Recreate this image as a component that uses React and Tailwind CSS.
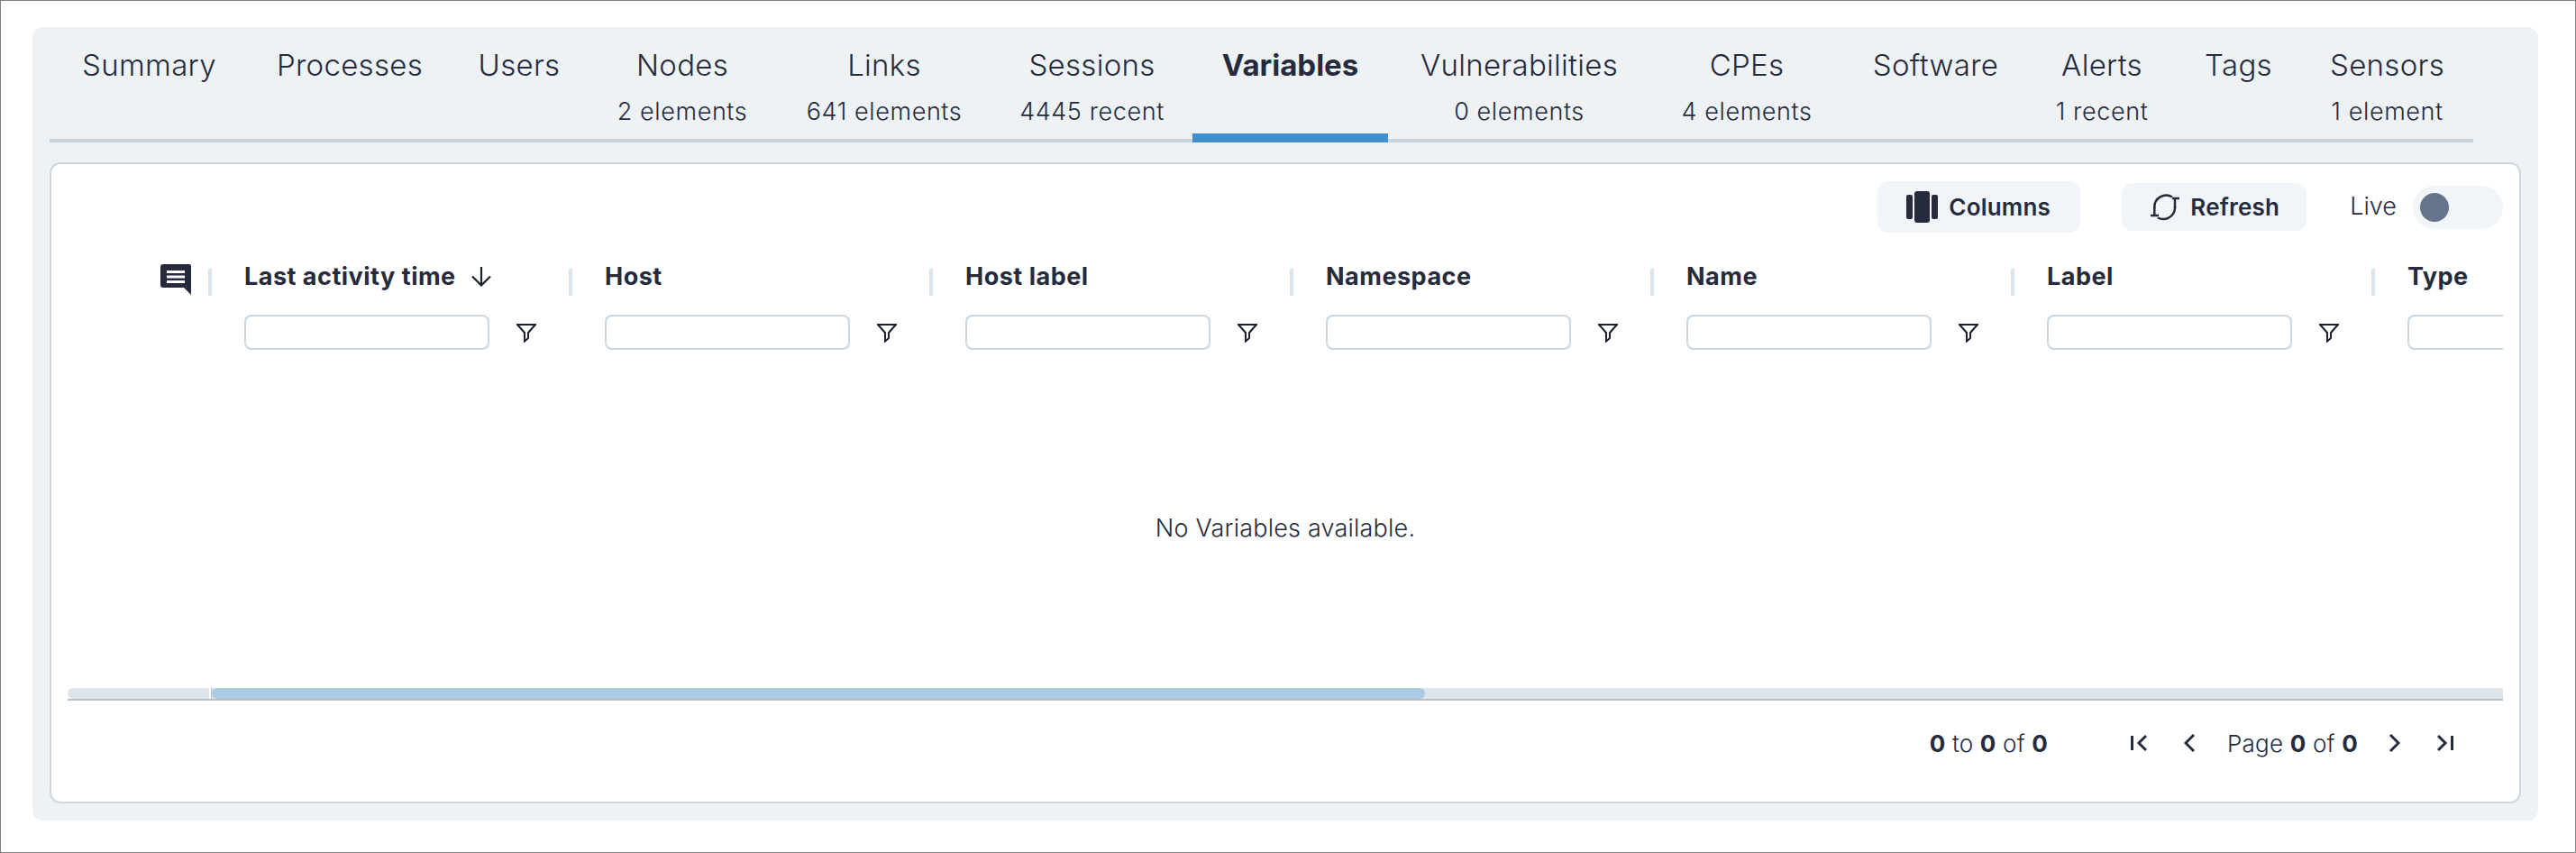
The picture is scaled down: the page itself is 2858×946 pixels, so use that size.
const tabs = [
  { label: 'Summary', width: 'w-[221px]' },
  { label: 'Processes', width: 'w-[224px]' },
  { label: 'Users', width: 'w-[152px]' },
  { label: 'Nodes', sub: '2 elements', width: 'w-[210px]' },
  { label: 'Links', sub: '641 elements', width: 'w-[238px]' },
  { label: 'Sessions', sub: '4445 recent', width: 'w-[223px]' },
  { label: 'Variables', width: 'w-[217px]', active: true },
  { label: 'Vulnerabilities', sub: '0 elements', width: 'w-[291px]' },
  { label: 'CPEs', sub: '4 elements', width: 'w-[214px]' },
  { label: 'Software', width: 'w-[205px]' },
  { label: 'Alerts', sub: '1 recent', width: 'w-[164px]' },
  { label: 'Tags', width: 'w-[139px]' },
  { label: 'Sensors', sub: '1 element', width: 'w-[191px]' },
]

const columns = ['Last activity time', 'Host', 'Host label', 'Namespace', 'Name', 'Label', 'Type']

const ColumnsIcon = () => (
  <svg width="35" height="35" viewBox="0 0 35 35" fill="#252b3d">
    <rect x="0" y="4" width="7" height="27" rx="2" />
    <rect x="9" y="0" width="17" height="35" rx="3" />
    <rect x="28" y="4" width="7" height="27" rx="2" />
  </svg>
)

const RefreshIcon = () => (
  <svg width="32" height="30" viewBox="0 0 32 30" fill="none" stroke="#252b3d" strokeWidth="2.5">
    <path d="M4.300 16V15A13 13 0 0 1 24 3.500" />
    <path d="M0 24H9" />
    <path d="M4.300 15V24" />
    <path d="M27 14V16A13 13 0 0 1 8 26.500" />
    <path d="M24 5H32" />
    <path d="M27 5V15" />
  </svg>
)

const CommentIcon = () => (
  <svg width="34" height="34" viewBox="0 0 34 34">
    <path d="M3 0h29a2 2 0 0 1 2 2v32l-8-8H3a3 3 0 0 1-3-3V3a3 3 0 0 1 3-3z" fill="#252b3d" />
    <path d="M7 7h20v3H7zM7 12.500h20v3H7zM7 18h20v3H7z" fill="#fff" />
  </svg>
)

const SortIcon = () => (
  <svg width="22" height="22" viewBox="0 0 22 22" fill="none" stroke="#1c2130" strokeWidth="2.200">
    <path d="M11 0V20M1 10.500L11 20.500L21 10.500" />
  </svg>
)

const FilterIcon = () => (
  <svg width="22" height="22" viewBox="0 0 22 22" fill="none" stroke="#1c2130" strokeWidth="2">
    <path d="M1 2H21L13 11V17L9 20.500V11Z" />
  </svg>
)

const FirstIcon = () => (
  <svg width="18" height="20" viewBox="0 0 18 20" fill="none" stroke="#252b3d" strokeWidth="3">
    <path d="M1.500 2V18M17 2L9 10L17 18" />
  </svg>
)

const LastIcon = () => (
  <svg width="18" height="20" viewBox="0 0 18 20" fill="none" stroke="#252b3d" strokeWidth="3">
    <path d="M16.500 2V18M1 2L9 10L1 18" />
  </svg>
)

const PrevIcon = () => (
  <svg width="12" height="20" viewBox="0 0 12 20" fill="none" stroke="#252b3d" strokeWidth="3">
    <path d="M11 1L2 10L11 19" />
  </svg>
)

const NextIcon = () => (
  <svg width="12" height="20" viewBox="0 0 12 20" fill="none" stroke="#252b3d" strokeWidth="3">
    <path d="M1 1L10 10L1 19" />
  </svg>
)

const GridColumn = ({ title }) => (
  <div className="w-[400px] shrink-0 pl-[36px] pt-[40px]">
    <div className="flex h-[30px] items-start">
      <span className="text-[27px] leading-[18px] font-bold tracking-[0.5px] whitespace-nowrap">{title}</span>
      {title === 'Last activity time' && <div className="ml-[17px] -mt-[2px]"><SortIcon /></div>}
      <div className="ml-auto h-[30px] w-1 shrink-0 bg-[#dde3ec]"></div>
    </div>
    <div className="mt-[21px] flex items-center">
      <div className="h-[39px] w-[272px] shrink-0 rounded-lg border-2 border-[#cbd8e2] bg-white"></div>
      <div className="ml-[30px] shrink-0"><FilterIcon /></div>
    </div>
  </div>
)

export default function App() {
  return (
    <div className="h-[946px] w-[2858px] border border-[#808080] bg-white font-['Inter',sans-serif] text-[#252b3d] overflow-hidden">
      <div className="ml-[35px] mt-[29px] h-[880px] w-[2780px] rounded-xl bg-[#eef2f5] px-[19px] pb-[19px]">
        <div className="flex h-[128px] w-[2689px] border-b-4 border-[#c8d5dc]">
          {tabs.map((tab) => (
            <div
              key={tab.label}
              className={`${tab.width} flex h-[128px] shrink-0 flex-col items-center pt-[22px] ${tab.active ? 'border-b-[10px] border-[#3f8fce]' : ''}`}
            >
              <span className={`text-[33px] leading-[40px] whitespace-nowrap ${tab.active ? 'font-bold' : 'font-light tracking-[0.3px]'}`}>{tab.label}</span>
              {tab.sub && <span className="mt-[16px] text-[27px] leading-[32px] font-light tracking-[0.6px] whitespace-nowrap">{tab.sub}</span>}
            </div>
          ))}
        </div>

        <div className="mt-[22px] flex h-[711px] flex-col rounded-xl border-2 border-[#cbd8e2] bg-white px-[18px]">
          <div className="mt-[19px] flex h-[57px] items-center justify-end">
            <button className="flex h-[57px] w-[225px] items-center gap-[12px] rounded-xl bg-[#f1f5f9] pl-[32px] text-[26px] font-semibold tracking-[0.2px]">
              <ColumnsIcon />
              Columns
            </button>
            <button className="ml-[46px] flex h-[53px] w-[205px] items-center gap-[12px] rounded-xl bg-[#f1f5f9] pl-[32px] text-[26px] font-semibold tracking-[0.2px]">
              <RefreshIcon />
              Refresh
            </button>
            <span className="ml-[48px] text-[27px] font-light">Live</span>
            <div className="ml-[18px] flex h-[48px] w-[100px] items-center rounded-full bg-[#f1f5f9] pl-[8px]">
              <div className="h-[32px] w-[32px] rounded-full bg-[#64748b]"></div>
            </div>
          </div>

          <div className="flex h-[130px] w-[2702px] overflow-hidden">
            <div className="flex w-[160px] shrink-0 items-start pt-[35px]">
              <div className="ml-[103px]"><CommentIcon /></div>
              <div className="ml-[19px] mt-[5px] h-[30px] w-1 bg-[#dde3ec]"></div>
            </div>
            {columns.map((title) => (
              <GridColumn key={title} title={title} />
            ))}
          </div>

          <div className="flex h-[375px] items-center justify-center pt-[22px] text-[27px] font-light tracking-[0.2px]">
            No Variables available.
          </div>

          <div className="flex h-[14px] w-[2702px] border-b-2 border-[#b8bec9]">
            <div className="h-[12px] w-[157px] rounded-l-md bg-[#dee5ec]"></div>
            <div className="ml-[2px] h-[12px] w-px bg-[#b8bec9]"></div>
            <div className="flex h-[12px] flex-1 bg-[#dee5ec]">
              <div className="h-[12px] w-[1346px] rounded-md bg-[#abcbe3]"></div>
            </div>
          </div>

          <div className="flex h-[94px] items-center justify-end pr-[55px] text-[26px] font-light tracking-[0.2px]">
            <span className="whitespace-nowrap"><b className="font-bold">0</b> to <b className="font-bold">0</b> of <b className="font-bold">0</b></span>
            <div className="ml-[92px]"><FirstIcon /></div>
            <div className="ml-[41px]"><PrevIcon /></div>
            <span className="ml-[36px] whitespace-nowrap">Page <b className="font-bold">0</b> of <b className="font-bold">0</b></span>
            <div className="ml-[35px]"><NextIcon /></div>
            <div className="ml-[41px]"><LastIcon /></div>
          </div>
        </div>
      </div>
    </div>
  )
}
